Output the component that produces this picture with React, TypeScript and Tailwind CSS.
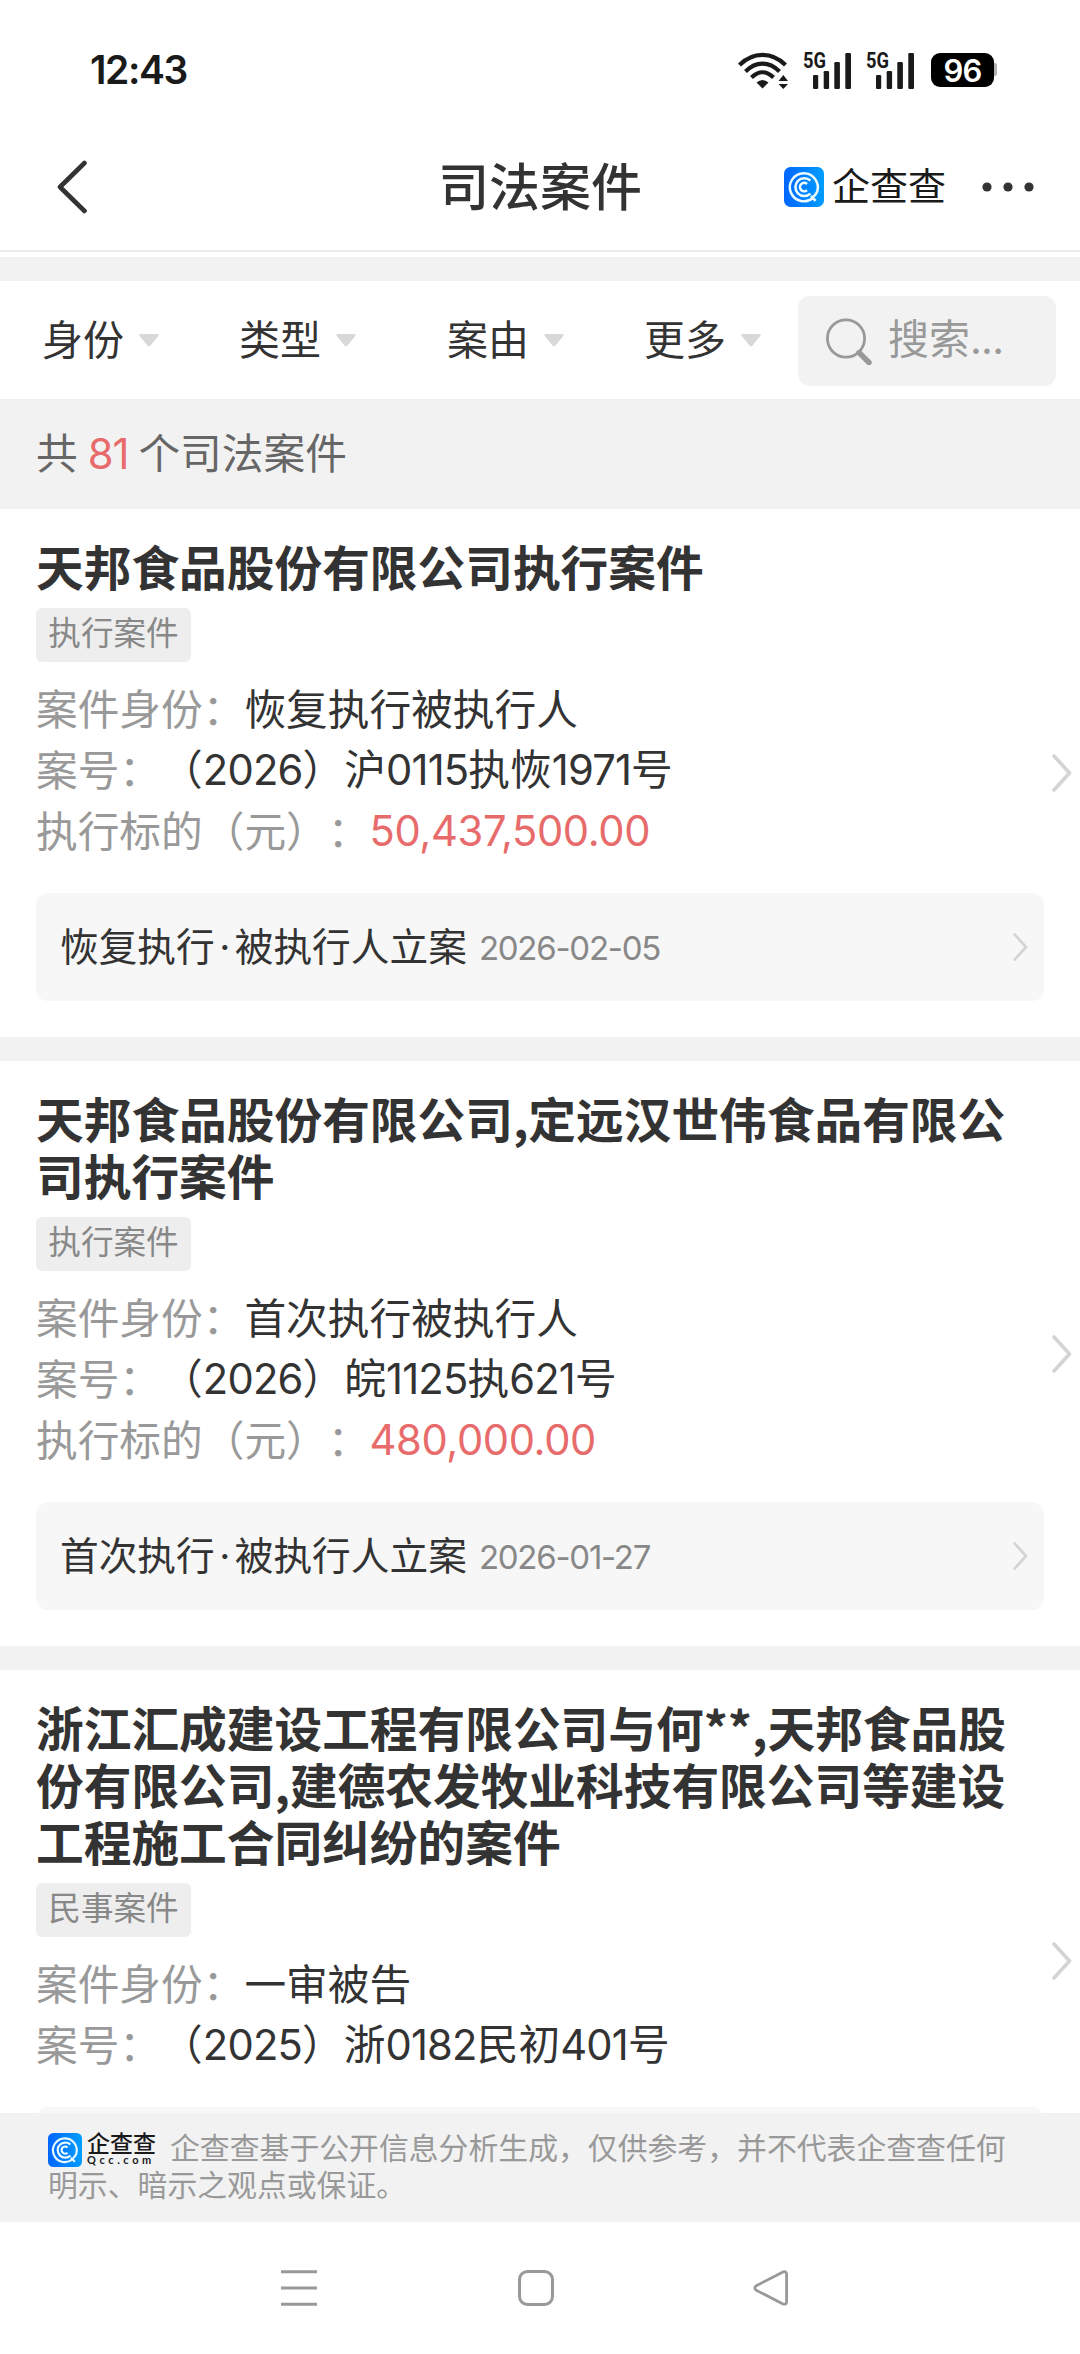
import type { ReactNode } from "react";

const CJK = "font-['Noto_Sans_CJK_SC',sans-serif]";

// Latin runs (digits and their separators) are set in Inter; the caller sets their tracking.
function Mixed({ text }: { text: string }) {
  return (
    <>
      {text.split(/([0-9,.\-]+)/).map((part, i) =>
        i % 2 ? (
          <span key={i} className="font-[Inter]">
            {part}
          </span>
        ) : (
          part
        ),
      )}
    </>
  );
}

function QccMark({ className, id }: { className: string; id: string }) {
  return (
    <svg className={className} viewBox="0 0 40 40" fill="none">
      <defs>
        <linearGradient id={id} x1="0" y1="0" x2="1" y2="0">
          <stop offset="0" stopColor="#0066ff" />
          <stop offset="1" stopColor="#009dff" />
        </linearGradient>
      </defs>
      <rect width="40" height="40" rx="6.5" fill={`url(#${id})`} />
      <g stroke="#eafaff">
        <path d="M28.6 31.2A14 14 0 1 1 33.2 24.5Q32.2 27.2 29.4 29.8" strokeWidth="2.5" />
        <path d="M27 29L31.6 33.8" strokeWidth="2.6" />
        <path d="M26.4 13.6A8.9 8.9 0 1 0 26.4 26.6" strokeWidth="2.6" />
        <path d="M23 17A4.2 4.2 0 1 0 23 23.2" strokeWidth="2.6" />
      </g>
    </svg>
  );
}

function Signal() {
  return (
    <svg className="h-[54px] w-[49px]" viewBox="0 -8 49 54" fill="#1a1a1a">
      <rect x="10" y="24" width="5.2" height="14" rx="1.2" />
      <rect x="20.7" y="20" width="5.4" height="18" rx="1.2" />
      <rect x="31.3" y="11" width="5.6" height="27" rx="1.2" />
      <rect x="42.3" y="2" width="5.7" height="36" rx="1.2" />
      <text x="0" y="16.8" fontFamily="Roboto" fontWeight="700" fontSize="22" textLength="23" lengthAdjust="spacingAndGlyphs">
        5G
      </text>
    </svg>
  );
}

function StatusBar() {
  return (
    <div className="flex h-[139px] items-center justify-between pr-[83px] pl-[90px] text-[#1a1a1a]">
      <div className="font-[Inter] text-[39px] leading-none font-semibold tracking-[-1.4px]">12:43</div>
      <div className="flex items-center">
        <svg className="h-[38px] w-[52px]" viewBox="0 0 52 38" fill="none" stroke="#1a1a1a" strokeWidth="4.2">
          <path d="M1.5 14C15 0.5 34 0.5 47.5 14" />
          <path d="M7.5 20.5C18 10 31 10 41.5 20.5" />
          <path d="M13.5 26.5C20.5 19.5 28.5 19.5 35.5 26.5" />
          <path d="M18.5 31.5Q24.5 26.5 30.5 31.5L24.5 37.5Z" fill="#1a1a1a" stroke="none" />
          <path d="M40.5 30L45.3 24L50 30ZM40.5 33L45.3 38L50 33Z" fill="#1a1a1a" stroke="none" />
        </svg>
        <div className="ml-[13px] flex gap-[14px]">
          <Signal />
          <Signal />
        </div>
        <div className="ml-[16px] flex h-[34px] w-[63px] items-center justify-center rounded-[9px] bg-black pt-px font-[Inter] text-[31px] leading-none font-semibold tracking-[-0.8px] text-white">
          96
        </div>
        <div className="h-[13px] w-[3px] rounded-r-[2px] bg-[#b3b3b3]" />
      </div>
    </div>
  );
}

function Header() {
  return (
    <div className="grid h-[113px] grid-cols-[1fr_auto_1fr] border-b-2 border-[#ececec] pb-[16px]">
      <div className="flex items-center pl-[56px]">
        <svg className="h-[54px] w-[32px]" viewBox="0 0 32 54" fill="none" stroke="#333" strokeWidth="4.6" strokeLinecap="round" strokeLinejoin="round">
          <path d="M28.5 3L4 27L28.5 51" />
        </svg>
      </div>
      <h1 className="flex items-center pb-[4px] text-[50.9px] leading-none font-medium">司法案件</h1>
      <div className="flex items-center justify-end pr-[46px]">
        <QccMark className="size-[40px]" id="mark-top" />
        <span className="ml-[8px] pb-[5px] text-[38px] leading-none text-[#1a1a1a]">企查查</span>
        <svg className="ml-[36px] h-[10px] w-[52px]" viewBox="0 0 52 10" fill="#333">
          <circle cx="5" cy="5" r="4.6" />
          <circle cx="26" cy="5" r="4.6" />
          <circle cx="47" cy="5" r="4.6" />
        </svg>
      </div>
    </div>
  );
}

function Filter({ label, className }: { label: string; className: string }) {
  return (
    <button className={`flex items-center ${className}`}>
      <span className="pb-[6px] text-[41px] leading-none">{label}</span>
      <svg className="ml-[15px] h-[13px] w-[20px]" viewBox="0 0 20 13" fill="#d8d8d8">
        <path d="M1.5 0H18.5Q20.5 0.5 19.3 2L11.3 11.8Q10 13 8.7 11.8L0.7 2Q-0.5 0.5 1.5 0Z" />
      </svg>
    </button>
  );
}

function FilterBar() {
  return (
    <div className="flex h-[118px] items-center bg-white pr-[24px]">
      <Filter label="身份" className="ml-[42px]" />
      <Filter label="类型" className="ml-[80px]" />
      <Filter label="案由" className="ml-[91px]" />
      <Filter label="更多" className="ml-[80px]" />
      <div className="mt-[2px] ml-auto flex h-[90px] w-[258px] items-center rounded-[12px] bg-[#f2f2f2] pl-[28px] text-[#999]">
        <svg className="h-[47px] w-[46px]" viewBox="0 0 46 47" fill="none" stroke="#999">
          <circle cx="20" cy="20.5" r="18.6" strokeWidth="2.8" />
          <path d="M33 34.5L43 44.5" strokeWidth="5.4" strokeLinecap="round" />
        </svg>
        <span className="ml-[16px] pb-[6px] text-[41px] leading-none">
          搜索<span className="font-[Inter] tracking-[-0.7px]">...</span>
        </span>
      </div>
    </div>
  );
}

function Chevron({ className }: { className: string }) {
  return (
    <svg className={className} viewBox="0 0 20 38" fill="none" stroke="#d4d4d4" strokeWidth="3.6" strokeLinecap="round" strokeLinejoin="round">
      <path d="M2 2L17.5 19L2 36" />
    </svg>
  );
}

function Row({ label, children }: { label: string; children: ReactNode }) {
  return (
    <div className="flex h-[61px] items-center leading-[61px] whitespace-nowrap">
      <span className="text-[#999]">{label}</span>
      {children}
    </div>
  );
}

type Case = {
  title: string[];
  tag: string;
  role: string;
  number: string;
  amount?: string;
  stage: [string, string];
  date: string;
};

function CaseCard({ item }: { item: Case }) {
  return (
    <article className="relative shrink-0 bg-white px-[36px] pt-[28px] pb-[36px]">
      <h2 className="text-[47.7px] leading-[57px] font-bold whitespace-nowrap">
        {item.title.map((line) => (
          <div key={line}>{line}</div>
        ))}
      </h2>
      <div className="mt-[14px] flex h-[54px] w-[155px] items-center justify-center rounded-[6px] bg-[#eee] pb-[7px] text-[32.6px] leading-none text-[#888]">
        {item.tag}
      </div>
      <div className="mt-[15px] text-[41.7px]">
        <Row label="案件身份：">{item.role}</Row>
        <Row label="案号：">
          <span className="[&>span]:tracking-[-0.019em]">
            <Mixed text={item.number} />
          </span>
        </Row>
        {item.amount && (
          <Row label="执行标的（元）：">
            <span className="text-[#e86b6b] [&>span]:tracking-[-0.009em]">
              <Mixed text={item.amount} />
            </span>
          </Row>
        )}
      </div>
      <div className="mt-[33px] flex h-[108px] items-center rounded-[12px] bg-[#f7f7f7] pr-[15px] pl-[24px] leading-none">
        <span className="pb-[3px] text-[38.7px]">
          {item.stage[0]}
          <span className="inline-block w-[20px] text-center font-[Inter]">·</span>
          {item.stage[1]}
        </span>
        <span className="ml-[12px] text-[33px] text-[#888] [&>span]:tracking-[-0.038em]">
          <Mixed text={item.date} />
        </span>
        <Chevron className="ml-auto h-[28px] w-[17px]" />
      </div>
      <Chevron className="absolute top-1/2 right-[7px] h-[38px] w-[22px] -translate-y-1/2" />
    </article>
  );
}

const cases: Case[] = [
  {
    title: ["天邦食品股份有限公司执行案件"],
    tag: "执行案件",
    role: "恢复执行被执行人",
    number: "（2026）沪0115执恢1971号",
    amount: "50,437,500.00",
    stage: ["恢复执行", "被执行人立案"],
    date: "2026-02-05",
  },
  {
    title: ["天邦食品股份有限公司,定远汉世伟食品有限公", "司执行案件"],
    tag: "执行案件",
    role: "首次执行被执行人",
    number: "（2026）皖1125执621号",
    amount: "480,000.00",
    stage: ["首次执行", "被执行人立案"],
    date: "2026-01-27",
  },
  {
    title: ["浙江汇成建设工程有限公司与何**,天邦食品股", "份有限公司,建德农发牧业科技有限公司等建设", "工程施工合同纠纷的案件"],
    tag: "民事案件",
    role: "一审被告",
    number: "（2025）浙0182民初401号",
    stage: ["", ""],
    date: "",
  },
];

function Disclaimer() {
  return (
    <footer className="h-[109px] shrink-0 bg-[#f2f2f2] pt-[14px] pl-[48px] text-[29.85px] leading-[38px] whitespace-nowrap text-[#999]">
      <div className="flex h-[37px] items-center">
        <QccMark className="mt-[8px] size-[34px]" id="mark-foot" />
        <div className="mt-[6px] ml-[5px] flex w-[72px] flex-col text-[#1a1a1a]">
          <span className="text-[23px] leading-[21px] font-medium">企查查</span>
          <span className="font-[Lato] text-[11px] leading-[13px] font-bold tracking-[3.6px]">Qcc.com</span>
        </div>
        <span className="ml-[11px]">企查查基于公开信息分析生成，仅供参考，并不代表企查查任何</span>
      </div>
      <div>明示、暗示之观点或保证。</div>
    </footer>
  );
}

function NavBar() {
  return (
    <nav className="flex h-[132px] shrink-0 items-center pl-[281px]">
      <svg className="h-[36px] w-[36px]" viewBox="0 0 36 36" stroke="#999" strokeWidth="3">
        <path d="M0 1.7H36M0 18H36M0 34.3H36" />
      </svg>
      <svg className="ml-[201px] h-[36px] w-[36px]" viewBox="0 0 36 36" fill="none" stroke="#999" strokeWidth="3">
        <rect x="1.5" y="1.5" width="33" height="33" rx="8" />
      </svg>
      <svg className="ml-[199px] h-[36px] w-[36px]" viewBox="0 0 36 36" fill="none" stroke="#999" strokeWidth="2.8" strokeLinejoin="round">
        <path d="M30 1.9L3.2 15.8Q0.4 18 3.2 20.2L30 34Q33.6 35 33.6 31.5V4.5Q33.6 0.9 30 1.9Z" />
      </svg>
    </nav>
  );
}

export default function App() {
  return (
    <div className={`flex h-[2354px] w-[1080px] flex-col overflow-hidden bg-white text-[#333] [text-spacing-trim:space-all] ${CJK}`}>
      <div className="shrink-0 bg-white">
        <StatusBar />
        <Header />
      </div>
      <main className="mt-[5px] flex min-h-0 flex-1 flex-col overflow-hidden bg-[#f2f2f2] pt-[24px]">
        <div className="shrink-0">
          <FilterBar />
          <div className="flex h-[110px] items-center border-t border-[#ececec] pb-[5px] pl-[36px] text-[41.7px] leading-none text-[#666]">
            共<span className="mx-[10px] pt-[5px] font-[Inter] tracking-[-1px] text-[#e86b6b]">81</span>个司法案件
          </div>
        </div>
        <div className="flex flex-col gap-[24px]">
          {cases.map((item) => (
            <CaseCard key={item.title[0]} item={item} />
          ))}
        </div>
      </main>
      <Disclaimer />
      <NavBar />
    </div>
  );
}
